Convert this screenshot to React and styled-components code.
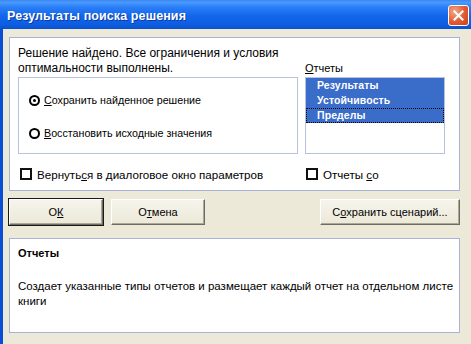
import React from "react";
import styled, { createGlobalStyle } from "styled-components";

const GlobalStyle = createGlobalStyle`
  body {
    margin: 0;
    background: #ece9d8;
  }
`;

const Window = styled.div`
  width: 471px;
  height: 344px;
  display: flex;
  flex-direction: column;
  background: #ece9d8;
  font-family: "Liberation Sans", Arial, sans-serif;
  font-size: 11px;
  color: #000;
  overflow: hidden;
`;

const TitleBar = styled.div`
  height: 29px;
  flex-shrink: 0;
  display: flex;
  align-items: center;
  justify-content: space-between;
  padding: 0 2px 0 7px;
  background: linear-gradient(
    #3b86f2 0%,
    #4a9aff 8%,
    #2a7ef6 25%,
    #1366ea 55%,
    #0d5de2 85%,
    #0a50cc 100%
  );
`;

const Title = styled.span`
  color: #fff;
  font-weight: 700;
  font-size: 12.5px;
  letter-spacing: 0.1px;
  padding-top: 2px;
  text-shadow: 1px 1px 0 #0b3c9e;
`;

const CloseButton = styled.div`
  width: 19px;
  height: 19px;
  margin-top: 1px;
  border: 1px solid #fff;
  border-radius: 3px;
  background: radial-gradient(circle at 30% 30%, #f3a88a, #e15a30 55%, #c8401d);
  display: flex;
  align-items: center;
  justify-content: center;
`;

const Frame = styled.div`
  flex: 1;
  display: flex;
  border-left: 3px solid #0a4ed8;
`;

const Body = styled.div`
  flex: 1;
  min-width: 0;
  display: flex;
  flex-direction: column;
  padding: 8px 11px 0 6px;
`;

const Panel = styled.div`
  background: #fff;
  border: 1px solid #a7b3da;
  padding: ${(p) => p.$pad};
  margin-top: ${(p) => p.$mt || 0}px;
  height: ${(p) => (p.$h ? `${p.$h}px` : "auto")};
  box-sizing: border-box;
  overflow: hidden;
`;

const TopGrid = styled.div`
  display: grid;
  grid-template-columns: 280px 140px;
  column-gap: 7px;
`;

const Message = styled.div`
  font-size: 12px;
  line-height: 15px;
  white-space: nowrap;
`;

const ListLabel = styled.div`
  align-self: end;
  line-height: 15px;
`;

const RadioBox = styled.div`
  height: 77px;
  box-sizing: border-box;
  border: 1px solid #b8c2e0;
  display: flex;
  flex-direction: column;
  gap: 19px;
  padding: 15px 0 0 10px;
  margin-top: 1px;
`;

const Option = styled.div`
  display: flex;
  align-items: center;
  gap: 4px;
  height: 14px;
  font-size: 10.7px;
`;

const Radio = styled.span`
  width: 7px;
  height: 7px;
  border: 2px solid #000;
  border-radius: 50%;
  display: flex;
  align-items: center;
  justify-content: center;
  &::after {
    content: "";
    width: 3px;
    height: 3px;
    border-radius: 50%;
    background: ${(p) => (p.$checked ? "#000" : "transparent")};
  }
`;

const ListBox = styled.div`
  height: 77px;
  box-sizing: border-box;
  border: 1px solid #b8c2e0;
  margin-top: 1px;
`;

const ListItem = styled.div`
  height: 15px;
  line-height: 15px;
  padding-left: 11px;
  background: #3a6cc9;
  color: #fff;
  font-weight: 700;
  font-size: 10.5px;
  letter-spacing: 0.1px;
  outline: ${(p) => (p.$focus ? "1px dotted #000" : "none")};
  outline-offset: -1px;
`;

const CheckRow = styled.div`
  display: flex;
  align-items: center;
  gap: 5px;
  height: 14px;
  margin-top: 13px;
  font-size: 11.6px;
  padding-left: ${(p) => p.$pl}px;
`;

const Check = styled.span`
  width: 8px;
  height: 8px;
  border: 2px solid #111;
`;

const ButtonRow = styled.div`
  display: flex;
  gap: 8px;
  margin-top: 8px;
`;

const Button = styled.button`
  width: ${(p) => p.$w}px;
  height: 26px;
  margin-left: ${(p) => (p.$right ? "auto" : "0")};
  font: inherit;
  color: #000;
  background: linear-gradient(#f6f4ec, #ece9d8);
  border: 1px solid;
  border-color: #fff #6e6c62 #6e6c62 #fff;
  box-shadow: ${(p) =>
    p.$default
      ? "0 0 0 1px #1a1a1a, inset -1px -1px 0 #aca899"
      : "inset -1px -1px 0 #aca899"};
  padding: 0;
`;

const InfoTitle = styled.div`
  font-weight: 700;
  line-height: 15px;
`;

const InfoText = styled.div`
  margin-top: 18px;
  line-height: 15px;
  font-size: 11.5px;
  white-space: nowrap;
`;

function App() {
  return (
    <>
      <GlobalStyle />
      <Window>
        <TitleBar>
          <Title>Результаты поиска решения</Title>
          <CloseButton>
            <svg width="11" height="11" viewBox="0 0 11 11">
              <path d="M1.5 1.5 L9.5 9.5 M9.5 1.5 L1.5 9.5" stroke="#fff" strokeWidth="2" strokeLinecap="square" />
            </svg>
          </CloseButton>
        </TitleBar>
        <Frame>
          <Body>
            <Panel $pad="8px 14px 9px 8px">
              <TopGrid>
                <Message>
                  Решение найдено. Все ограничения и условия
                  <br />
                  оптимальности выполнены.
                </Message>
                <ListLabel>
                  <u>О</u>тчеты
                </ListLabel>
                <RadioBox>
                  <Option>
                    <Radio $checked />
                    <span>
                      <u>С</u>охранить найденное решение
                    </span>
                  </Option>
                  <Option>
                    <Radio />
                    <span>
                      <u>В</u>осстановить исходные значения
                    </span>
                  </Option>
                </RadioBox>
                <ListBox>
                  <ListItem>Результаты</ListItem>
                  <ListItem>Устойчивость</ListItem>
                  <ListItem $focus>Пределы</ListItem>
                </ListBox>
                <CheckRow $pl={2}>
                  <Check />
                  <span>
                    Вернуть<u>с</u>я в диалоговое окно параметров
                  </span>
                </CheckRow>
                <CheckRow $pl={1}>
                  <Check />
                  <span>
                    Отчеты <u>с</u>о
                  </span>
                </CheckRow>
              </TopGrid>
            </Panel>
            <ButtonRow>
              <Button $w={94} $default>
                О<u>К</u>
              </Button>
              <Button $w={94}>
                О<u>т</u>мена
              </Button>
              <Button $w={140} $right>
                С<u>о</u>хранить сценарий...
              </Button>
            </ButtonRow>
            <Panel $pad="7px 4px 0 8px" $mt={13} $h={95}>
              <InfoTitle>Отчеты</InfoTitle>
              <InfoText>
                Создает указанные типы отчетов и размещает каждый отчет на отдельном листе
                <br />
                книги
              </InfoText>
            </Panel>
          </Body>
        </Frame>
      </Window>
    </>
  );
}

export default App;
